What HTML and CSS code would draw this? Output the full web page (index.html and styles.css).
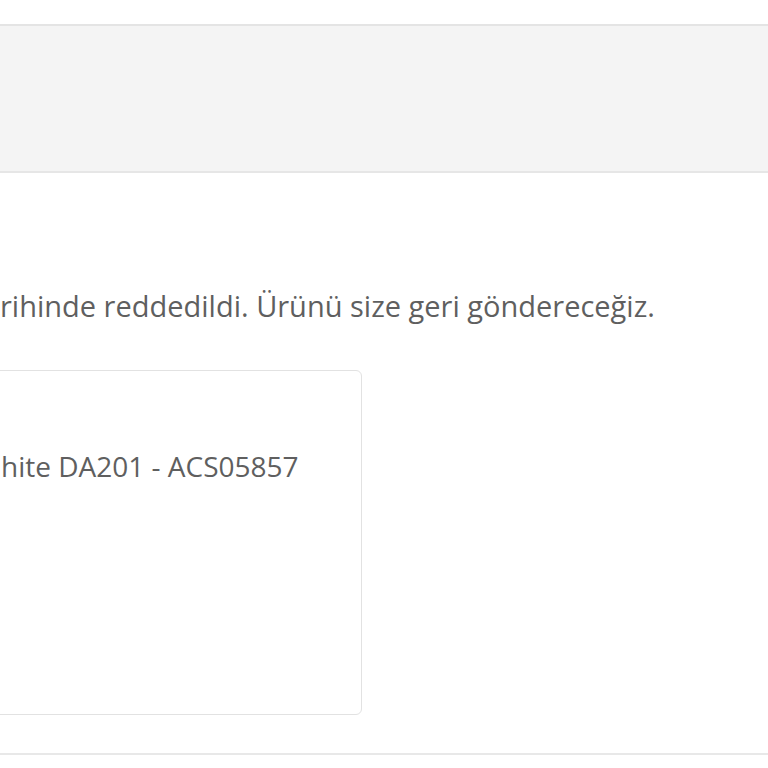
FILE: index.html
```html
<!DOCTYPE html>
<html lang="tr">
<head>
    <meta charset="UTF-8">
    <meta name="viewport" content="width=device-width, initial-scale=1.0">
    <title>İade Talebi</title>
    <link rel="stylesheet" href="styles.css">
</head>
<body>
    <div class="topbar"></div>

    <div class="content">
        <p class="notice">rihinde reddedildi. Ürünü size geri göndereceğiz.</p>

        <div class="card">
            <p class="product">hite DA201 - ACS05857</p>
        </div>
    </div>

    <div class="divider"></div>
</body>
</html>
```

FILE: styles.css
```css
body {
    margin: 0;
    background: #ffffff;
    font-family: "Open Sans", "Noto Sans", Arial, sans-serif;
    color: #5f5f5f;
}
.topbar {
    margin-top: 24px;
    height: 145px;
    background: #f4f4f4;
    border-top: 2px solid #e4e4e4;
    border-bottom: 2px solid #e6e6e6;
}
.content {
    padding-top: 117px;
}
.notice {
    margin: 0;
    font-size: 29px;
    line-height: 32px;
    letter-spacing: 0;
}
.card {
    margin: 48px 0 0 -20px;
    width: 382px;
    height: 345px;
    border: 1px solid #e2e2e2;
    border-radius: 6px;
    box-sizing: border-box;
    padding: 79px 0 0 20px;
}
.product {
    margin: 0;
    font-size: 28px;
    line-height: 32px;
}
.divider {
    margin-top: 38px;
    border-top: 2px solid #e8e8e8;
}
```
